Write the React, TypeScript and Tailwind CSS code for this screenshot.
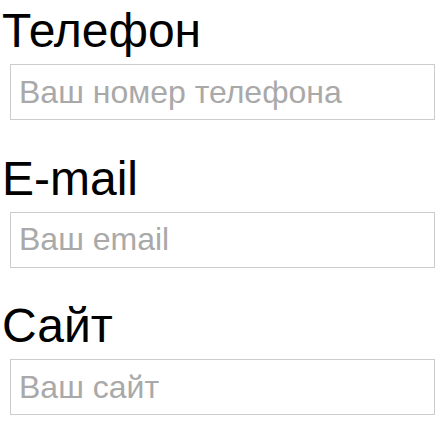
import React from "react";

const fields = [
  { label: "Телефон", placeholder: "Ваш номер телефона", type: "tel" },
  { label: "E-mail", placeholder: "Ваш email", type: "email" },
  { label: "Сайт", placeholder: "Ваш сайт", type: "text" },
];

export default function App() {
  return (
    <div
      className="w-[441px] h-[426px] bg-white overflow-hidden pt-[3px]"
      style={{ fontFamily: '"Liberation Sans", Arial, sans-serif' }}
    >
      {fields.map((f) => (
        <div key={f.label} className="mb-[30.5px]">
          <h2 className="ml-[2px] text-[48px] leading-[56px] text-black font-normal">
            {f.label}
          </h2>
          <input
            type={f.type}
            placeholder={f.placeholder}
            className="block mt-[5px] ml-[10px] w-[425px] h-[56px] border border-[#cccccc] bg-white pl-[8px] text-[32px] text-black placeholder:text-[#a9a9a9] outline-none"
            style={{ fontFamily: '"Liberation Sans", Arial, sans-serif' }}
          />
        </div>
      ))}
    </div>
  );
}
